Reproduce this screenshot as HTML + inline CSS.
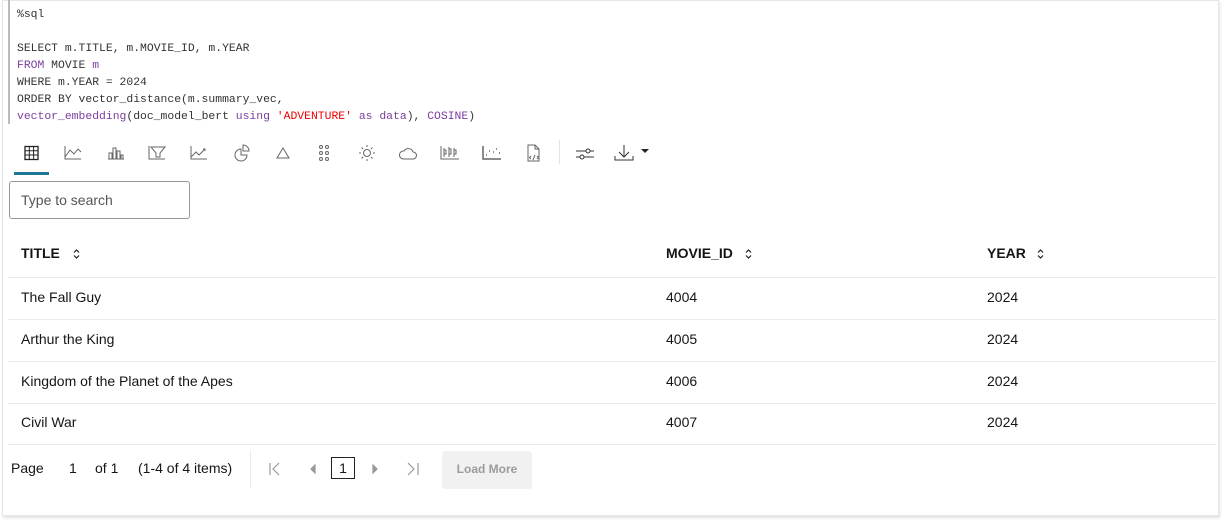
<!DOCTYPE html>
<html><head><meta charset="utf-8"><style>
*{box-sizing:border-box;margin:0;padding:0}
body{width:1224px;height:520px;background:#fff;font-family:"Liberation Sans",sans-serif;position:relative;overflow:hidden;color:#161513}
.card{position:absolute;left:2px;top:0;width:1217px;height:516px;border:1px solid #e6e6e6;box-shadow:1px 2px 3px rgba(0,0,0,.12);background:#fff}
.code{position:absolute;left:8px;top:0;height:124px;border-left:2px solid #bbb;padding:7px 0 0 7px;font-family:"Liberation Mono",monospace;font-size:11.4px;line-height:17px;color:#333;white-space:pre}
.k{color:#7a3e9d}.s{color:#e00}
.tb{position:absolute;top:140px;left:0;height:36px}
.tb svg{position:absolute;top:0}
.ul{position:absolute;left:14px;top:172px;width:35px;height:3px;background:#1f7596}
.sep{position:absolute;left:559px;top:140px;width:1px;height:24px;background:#e4e4e4}
.search{position:absolute;left:9px;top:181px;width:181px;height:38px;border:1px solid #979797;border-radius:3px;font-size:14px;color:#555;padding:10px 0 0 11px}
.th{position:absolute;top:245px;font-size:14px;font-weight:bold}
.line{position:absolute;left:8px;width:1208px;height:1px;background:#ebebeb}
.td{position:absolute;font-size:14px}
.pg{position:absolute;top:460px;font-size:14px}
.lm{position:absolute;left:442px;top:451px;width:90px;height:38px;background:#f1f1f1;border-radius:3px;color:#9b9b9b;font-size:12px;text-align:center;line-height:36px;font-weight:bold}
.box{position:absolute;left:331px;top:457px;width:24px;height:22px;border:1px solid #222;font-size:14px;text-align:center;line-height:20px}
</style></head><body>
<div class="card"></div>
<div class="code">%sql

SELECT m.TITLE, m.MOVIE_ID, m.YEAR
<span class="k">FROM</span> MOVIE <span class="k">m</span>
WHERE m.YEAR = 2024
ORDER BY vector_distance(m.summary_vec,
<span class="k">vector_embedding</span>(doc_model_bert <span class="k">using</span> <span class="s">'ADVENTURE'</span> <span class="k">as data</span>), <span class="k">COSINE</span>)</div>

<div class="tb" style="width:700px">
<svg width="700" height="30" viewBox="0 0 700 30" fill="none" stroke="#444" stroke-width="1">
<rect x="25" y="6.5" width="13" height="13" stroke="#222" stroke-width="1.3"/>
<path d="M25 10.8h13M25 15h13M29.3 6.5v13M33.6 6.5v13" stroke="#222"/>
<path d="M65 6v13h16M65 17l5-7 4 4 4-5 3 3" stroke="#666"/>
<path d="M108 19h16M109 19v-6h3v6M113 19v-11h3v11M117 19v-8h3v8M121 19v-4h2v4" stroke="#666"/>
<path d="M149 6v13h16M151 7h14l-5 6v4h-4v-4z" stroke="#666"/>
<path d="M191 6v13h16M191 17l5-5 3 3 6-6M203 9h2v2" stroke="#666"/>
<path d="M241 9a6 6 0 1 0 6 6h-6z M243 5a6 6 0 0 1 6 6h-6z" stroke="#666"/>
<path d="M283 8l-6 10h12z" stroke="#666"/>
<circle cx="321" cy="7" r="1.5" stroke="#666"/><circle cx="327" cy="7" r="1.5" stroke="#666"/>
<circle cx="321" cy="13" r="1.5" stroke="#666"/><circle cx="327" cy="13" r="1.5" stroke="#666"/>
<circle cx="321" cy="19" r="1.5" stroke="#666"/><circle cx="327" cy="19" r="1.5" stroke="#666"/>
<circle cx="367" cy="13" r="3.5" stroke="#666"/>
<path d="M367 5v2M367 19v2M359 13h2M373 13h2M361.5 7.5l1.5 1.5M371 17l1.5 1.5M361.5 18.5l1.5-1.5M371 9l1.5-1.5" stroke="#666"/>
<path d="M403 19h10a3.5 3.5 0 0 0 0-7 5 5 0 0 0-9-1 4 4 0 0 0-1 8z" stroke="#666"/>
<path d="M441 6v13h18M444 8v9M444 10h2v4h-2M449 7v10M449 9h2v5h-2M454 8v9M454 10h2v4h-2" stroke="#666"/>
<path d="M483 6v13h18M486 15h1M489 11h1M493 12h1M496 9h1M499 13h1" stroke="#666" stroke-width="1.5"/>
<path d="M528 5h7l4 4v12h-11z M535 5v4h4 M531 16l-1.5 1.5 1.5 1.5M537 16l1.5 1.5-1.5 1.5M535 15l-2 5" stroke="#666"/>
<path d="M576 11h18M576 17h18" stroke="#333"/><circle cx="588" cy="11" r="2" fill="#fff" stroke="#333"/><circle cx="582" cy="17" r="2" fill="#fff" stroke="#333"/>
<path d="M624 5v12M619 12l5 5 5-5M615 16v4h18v-4" stroke="#333"/>
<path d="M641 9h8l-4 4z" fill="#222" stroke="none"/>
</svg></div>
<div class="ul"></div>
<div class="sep"></div>

<div class="search">Type to search</div>

<div class="th" style="left:21px">TITLE</div>
<div class="th" style="left:666px">MOVIE_ID</div>
<div class="th" style="left:987px">YEAR</div>
<svg style="position:absolute;left:0;top:0" width="1224" height="270" fill="none" stroke="#222" stroke-width="1.2">
<path d="M74 252.5l2.5-2.5 2.5 2.5M74 255.5l2.5 2.5 2.5-2.5"/>
<path d="M746 252.5l2.5-2.5 2.5 2.5M746 255.5l2.5 2.5 2.5-2.5"/>
<path d="M1038 252.5l2.5-2.5 2.5 2.5M1038 255.5l2.5 2.5 2.5-2.5"/>
</svg>
<div class="line" style="top:277px"></div>
<div class="line" style="top:319px"></div>
<div class="line" style="top:361px"></div>
<div class="line" style="top:403px"></div>
<div class="line" style="top:444px"></div>

<div class="td" style="left:21px;top:289px">The Fall Guy</div>
<div class="td" style="left:666px;top:289px">4004</div>
<div class="td" style="left:987px;top:289px">2024</div>
<div class="td" style="left:21px;top:331px">Arthur the King</div>
<div class="td" style="left:666px;top:331px">4005</div>
<div class="td" style="left:987px;top:331px">2024</div>
<div class="td" style="left:21px;top:373px">Kingdom of the Planet of the Apes</div>
<div class="td" style="left:666px;top:373px">4006</div>
<div class="td" style="left:987px;top:373px">2024</div>
<div class="td" style="left:21px;top:414px">Civil War</div>
<div class="td" style="left:666px;top:414px">4007</div>
<div class="td" style="left:987px;top:414px">2024</div>

<div class="pg" style="left:11px">Page</div>
<div class="pg" style="left:69px">1</div>
<div class="pg" style="left:95px">of 1</div>
<div class="pg" style="left:138px">(1-4 of 4 items)</div>
<div style="position:absolute;left:250px;top:450px;width:1px;height:38px;background:#ececec"></div>
<svg style="position:absolute;left:260px;top:455px" width="170" height="30" fill="none" stroke="#999" stroke-width="1.2">
<path d="M10 8v12M19 8l-6 6 6 6"/>
<path d="M55 10l-4 4 4 4z" fill="#999"/>
<path d="M113 10l4 4-4 4z" fill="#999"/>
<path d="M148 8l6 6-6 6M158 8v12"/>
</svg>
<div class="box">1</div>
<div class="lm">Load More</div>
</body></html>
